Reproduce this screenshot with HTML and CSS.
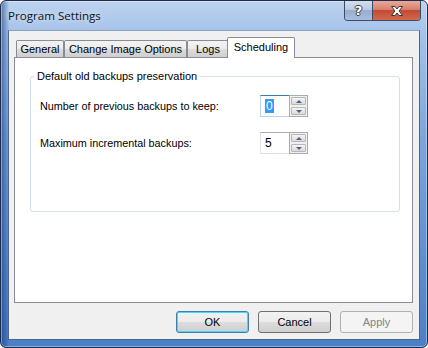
FILE: index.html
```html
<!DOCTYPE html>
<html lang="en">
<head>
    <meta charset="UTF-8">
    <title>Program Settings</title>
    <link rel="stylesheet" href="styles.css">
</head>
<body>
    <div class="window">
        <div class="titlebar">
            <span class="title">Program Settings</span>
            <div class="caption-buttons">
                <div class="cap-btn help">?</div>
                <div class="cap-btn close">
                    <svg width="16" height="12" viewBox="0 0 16 12">
                        <path d="M2.5 1.5 H6 L8 4 L10 1.5 H13.5 L10 6 L13.5 10.5 H10 L8 8 L6 10.5 H2.5 L6 6 Z" fill="#fff" stroke="#3a3a3a" stroke-width="1" stroke-linejoin="round"/>
                    </svg>
                </div>
            </div>
        </div>
        <div class="client">
            <div class="tabs">
                <div class="tab tab-general">General</div>
                <div class="tab tab-image">Change Image Options</div>
                <div class="tab tab-logs">Logs</div>
                <div class="tab tab-sched active">Scheduling</div>
            </div>
            <div class="panel">
                <fieldset class="group">
                    <legend>Default old backups preservation</legend>
                    <div class="row">
                        <label for="prevBackups">Number of previous backups to keep:</label>
                        <div class="spin focused">
                            <div class="spin-value" id="prevBackups"><span class="selected">0</span></div>
                            <div class="spin-buttons">
                                <div class="spin-btn up"></div>
                                <div class="spin-btn down"></div>
                            </div>
                        </div>
                    </div>
                    <div class="row">
                        <label for="incBackups">Maximum incremental backups:</label>
                        <div class="spin">
                            <div class="spin-value" id="incBackups">5</div>
                            <div class="spin-buttons">
                                <div class="spin-btn up"></div>
                                <div class="spin-btn down"></div>
                            </div>
                        </div>
                    </div>
                </fieldset>
            </div>
            <div class="buttons">
                <button class="btn default">OK</button>
                <button class="btn">Cancel</button>
                <button class="btn" disabled>Apply</button>
            </div>
        </div>
    </div>
</body>
</html>
```

FILE: styles.css
```css
body {
    margin: 0;
    font-family: "Liberation Sans", Arial, sans-serif;
    font-size: 11px;
    color: #000;
    background: #fff;
}
.window {
    width: 428px;
    height: 348px;
    box-sizing: border-box;
    border: 1px solid #1d2c47;
    border-radius: 6px;
    padding: 0 7px 7px 7px;
    display: flex;
    flex-direction: column;
    background:
        linear-gradient(to right, rgba(8, 45, 125, 0.55) 0, rgba(8, 45, 125, 0.1) 7px, rgba(8, 45, 125, 0) 8px),
        linear-gradient(to bottom, #bcd3ef 0, #a6c3e9 30px, #7ca5dc 40%, #4b7fc8 100%);
    box-shadow: inset 0 0 0 1px rgba(255, 255, 255, 0.4);
}
.titlebar {
    height: 29px;
    display: flex;
    align-items: center;
    justify-content: space-between;
}
.title {
    font-family: "Open Sans", "Noto Sans", sans-serif;
    font-size: 11.6px;
    color: #111;
    text-shadow: 0 0 6px rgba(255, 255, 255, 0.9);
    margin-top: -1px;
}
.caption-buttons {
    align-self: flex-start;
    display: flex;
    margin-right: -1px;
    border: 1px solid #3b4c66;
    border-top: none;
    border-radius: 0 0 4px 4px;
    overflow: hidden;
    height: 19px;
}
.cap-btn {
    display: flex;
    align-items: center;
    justify-content: center;
    height: 19px;
}
.help {
    width: 27px;
    border-right: 1px solid #3b4c66;
    background: linear-gradient(to bottom, #d3deee 0, #b9cbe3 45%, #98add0 50%, #a9bfdd 100%);
    color: #fff;
    font-family: "DejaVu Sans", sans-serif;
    font-weight: bold;
    font-size: 13px;
    text-shadow: 0 0 1px #333, 1px 0 0 #444, -1px 0 0 #444, 0 1px 0 #444, 0 -1px 0 #444;
}
.close {
    width: 47px;
    background: linear-gradient(to bottom, #e9a99c 0, #d8806d 45%, #c34a33 50%, #d26a4f 100%);
}
.client {
    flex: 1;
    box-sizing: border-box;
    border: 1px solid #4f6585;
    border-top-color: #8ba0bd;
    background: #f0f0f0;
    padding: 6px 6px 6px 5px;
    display: flex;
    flex-direction: column;
}
.tabs {
    height: 20px;
    display: flex;
    align-items: flex-end;
    padding-left: 2px;
}
.tab {
    box-sizing: border-box;
    height: 17px;
    border: 1px solid #898c95;
    border-bottom: none;
    border-radius: 2px 2px 0 0;
    background: linear-gradient(to bottom, #f3f3f3 0, #ebebeb 50%, #dddddd 50%, #cfcfcf 100%);
    display: flex;
    align-items: center;
    justify-content: center;
    padding-bottom: 1px;
}
.tab-general { width: 48px; }
.tab-image { width: 123px; }
.tab-logs { width: 42px; }
.tab-sched { width: 68px; }
.tab.active {
    height: 21px;
    margin-left: -2px;
    margin-bottom: -1px;
    background: #fff;
    position: relative;
    z-index: 1;
    padding-bottom: 2px;
}
.panel {
    height: 246px;
    box-sizing: border-box;
    border: 1px solid #898c95;
    background: #fff;
    padding: 11px 0 0 15px;
}
.group {
    width: 370px;
    height: 143px;
    box-sizing: border-box;
    margin: 0;
    border: 1px solid #d5dfe5;
    border-radius: 3px;
    padding: 12px 0 0 9px;
}
.group legend {
    line-height: 14px;
    padding: 0 3px;
    margin-left: -6px;
}
.row {
    display: grid;
    grid-template-columns: 220px 48px;
    align-items: center;
    height: 22px;
    margin-bottom: 15px;
}
.row label {
    font-size: 10.8px;
}
.spin {
    display: flex;
    height: 22px;
}
.spin-value {
    flex: 1;
    box-sizing: border-box;
    border: 1px solid #e2e3ea;
    border-top-color: #abadb3;
    border-right: none;
    padding-left: 4px;
    font-size: 12px;
    display: flex;
    align-items: center;
    background: #fff;
}
.spin.focused .spin-value {
    border-color: #b9d4ea;
    border-top-color: #3d7bad;
}
.selected {
    background: #3399ff;
    color: #fff;
    padding: 0 1px;
    line-height: 14px;
}
.spin-buttons {
    width: 19px;
    box-sizing: border-box;
    border: 1px solid #acacac;
    background: #f0f0f0;
    padding: 1px;
    display: flex;
    flex-direction: column;
    gap: 2px;
}
.spin-btn {
    flex: 1;
    border: 1px solid #b7b7b7;
    border-radius: 1px;
    background: linear-gradient(to bottom, #f6f6f6 0, #e6e6e6 50%, #dadada 100%);
    display: flex;
    align-items: center;
    justify-content: center;
}
.spin-btn::after {
    content: "";
    border-left: 3px solid transparent;
    border-right: 3px solid transparent;
}
.spin-btn.up::after {
    border-bottom: 3px solid #4d6185;
}
.spin-btn.down::after {
    border-top: 3px solid #4d6185;
}
.buttons {
    display: flex;
    justify-content: flex-end;
    gap: 9px;
    margin-top: 8px;
}
.btn {
    width: 73px;
    height: 22px;
    box-sizing: border-box;
    border: 1px solid #707070;
    border-radius: 3px;
    background: linear-gradient(to bottom, #f2f2f2 0, #ebebeb 50%, #dddddd 50%, #cfcfcf 100%);
    font-family: "Liberation Sans", Arial, sans-serif;
    font-size: 11px;
    color: #000;
    padding: 0;
}
.btn.default {
    border-color: #3c7fb1;
    box-shadow: inset 0 0 0 1px #48d8fb;
}
.btn:disabled {
    border-color: #adb2b5;
    background: #f4f4f4;
    color: #838383;
}
```
